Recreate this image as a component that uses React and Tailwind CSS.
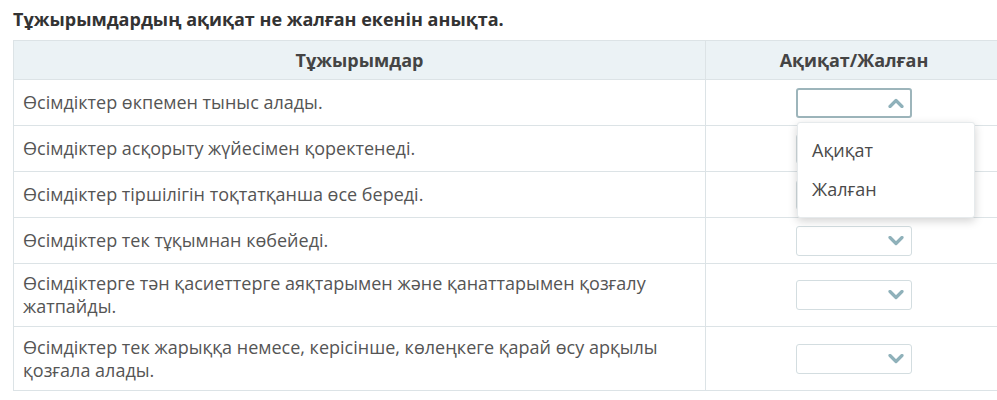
const rows = [
  { text: "Өсімдіктер өкпемен тыныс алады.", tall: false, open: true },
  { text: "Өсімдіктер асқорыту жүйесімен қоректенеді.", tall: false },
  { text: "Өсімдіктер тіршілігін тоқтатқанша өсе береді.", tall: false },
  { text: "Өсімдіктер тек тұқымнан көбейеді.", tall: false },
  {
    text: "Өсімдіктерге тән қасиеттерге аяқтарымен және қанаттарымен қозғалу жатпайды.",
    tall: true,
  },
  {
    text: "Өсімдіктер тек жарыққа немесе, керісінше, көлеңкеге қарай өсу арқылы қозғала алады.",
    tall: true,
  },
];

function Chevron({ up }) {
  return (
    <svg width="16" height="10" viewBox="0 0 16 10" className="text-[#8fb1ba]">
      <path
        d={up ? "M2 8.5 L8 2.5 L14 8.5" : "M2 1.5 L8 7.5 L14 1.5"}
        fill="none"
        stroke="currentColor"
        strokeWidth="3.2"
        strokeLinecap="round"
        strokeLinejoin="round"
      />
    </svg>
  );
}

function Select({ open }) {
  return (
    <div className="relative w-[116px] h-[30px]">
      <div
        className={
          open
            ? "w-full h-full rounded-[3px] border-2 border-[#9db5bb] bg-white flex items-center justify-end pr-[6px]"
            : "w-full h-full rounded-[3px] border border-[#d3dde0] bg-white flex items-center justify-end pr-[7px]"
        }
      >
        <Chevron up={open} />
      </div>
      {open && (
        <div className="absolute left-[1px] top-[34px] w-[178px] h-[96px] bg-white rounded-[3px] border border-[#e6eaec] shadow-[0_3px_10px_rgba(0,0,0,0.18)] z-10 pt-[15px] pl-[14px] text-[18px] text-[#4a4a4a]">
          <div className="h-[39px] leading-[25px]">Ақиқат</div>
          <div className="leading-[25px]">Жалған</div>
        </div>
      )}
    </div>
  );
}

export default function App() {
  return (
    <div
      className="w-[997px] h-[400px] overflow-hidden bg-white"
      style={{ fontFamily: '"Open Sans", "Noto Sans", sans-serif' }}
    >
      <h1 className="pl-[13px] pt-[7px] h-[40px] text-[18px] font-bold text-[#333] leading-[24px]">
        Тұжырымдардың ақиқат не жалған екенін анықта.
      </h1>
      <div className="ml-[13px] w-[990px] border border-[#dce3e6]">
        <div className="flex h-[39px] bg-[#ebf2f5] border-b border-[#dce3e6] text-[18px] font-bold text-[#444]">
          <div className="w-[692px] flex items-center justify-center border-r border-[#dce3e6]">
            Тұжырымдар
          </div>
          <div className="flex-1 flex items-center justify-center">Ақиқат/Жалған</div>
        </div>
        {rows.map((r, i) => (
          <div
            key={i}
            className={
              (r.tall ? "h-[63px]" : "h-[46px]") +
              (i < rows.length - 1 ? " border-b border-[#dce3e6]" : "") +
              " flex"
            }
          >
            <div className="w-[692px] border-r border-[#dce3e6] flex items-center pl-[9px] pr-[10px] text-[18px] leading-[23px] text-[#555]">
              {r.text}
            </div>
            <div className="flex-1 flex items-center justify-center">
              <Select open={r.open} />
            </div>
          </div>
        ))}
      </div>
    </div>
  );
}
